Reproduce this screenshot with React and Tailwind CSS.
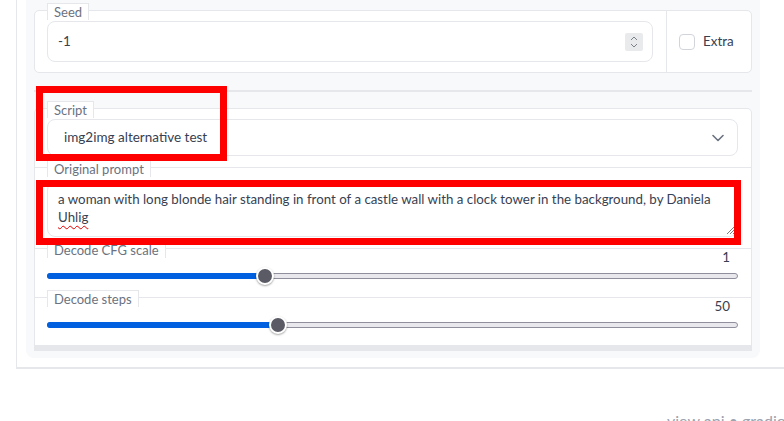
import React from "react";

const sliders = [
  { label: "Decode CFG scale", value: "1", ratio: 0.3105, last: false },
  { label: "Decode steps", value: "50", ratio: 0.33, last: true },
];

function BlockLabel({ children }) {
  return (
    <div className="self-start -mt-[8px] h-[17px] whitespace-nowrap border-l border-r border-t border-[#e5e7eb] bg-white px-[6px] text-[13px] leading-[16px] text-[#6b7280]">
      {children}
    </div>
  );
}

function Stepper() {
  return (
    <svg width="18" height="18" viewBox="0 0 18 18" className="rounded-[2px] bg-[#e9eaec]">
      <polyline points="6,7 9,4 12,7" fill="none" stroke="#7b8089" strokeWidth="1" />
      <polyline points="6,11 9,14 12,11" fill="none" stroke="#7b8089" strokeWidth="1" />
    </svg>
  );
}

function Chevron() {
  return (
    <svg width="12" height="8" viewBox="0 0 12 8">
      <polyline points="1,1.5 6,6.5 11,1.5" fill="none" stroke="#6b7280" strokeWidth="1.6" strokeLinecap="round" strokeLinejoin="round" />
    </svg>
  );
}

function ResizeHandle() {
  return (
    <svg width="11" height="11" viewBox="0 0 11 11" className="absolute bottom-[1px] right-[1px]">
      <line x1="10" y1="2" x2="2" y2="10" stroke="#7d7d7d" strokeWidth="1" />
      <line x1="10" y1="5" x2="5" y2="10" stroke="#7d7d7d" strokeWidth="1" />
      <line x1="10" y1="8" x2="8" y2="10" stroke="#7d7d7d" strokeWidth="1" />
    </svg>
  );
}

function Slider({ ratio }) {
  const pos = `calc(${ratio} * (100% - 18px) + 9px)`;
  return (
    <div className="relative mt-[1px] h-[18px]">
      <div className="absolute left-0 right-0 top-[6px] h-[6px] rounded-full border border-[#8f8f9d] bg-[#e9e9ed]" />
      <div className="absolute left-0 top-[6px] h-[6px] rounded-l-full bg-[#0060df]" style={{ width: pos }} />
      <div
        className="absolute top-0 -ml-[9px] h-[18px] w-[18px] rounded-full border-2 border-white bg-[#5b5b66] shadow-[0_1px_2px_rgba(0,0,0,0.35)]"
        style={{ left: pos }}
      />
    </div>
  );
}

export default function App() {
  return (
    <div className="relative h-[421px] overflow-hidden bg-white font-['Lato',sans-serif] text-[#374151]">
      <div className="ml-4 w-[900px] border-b-2 border-l border-[#e5e7eb] pb-[9px] pl-[9px]">
        <div className="w-[734px] rounded-b-lg bg-[#f8f9fa] px-2 pb-[7px] pt-[10px]">
          {/* Seed block */}
          <div className="flex rounded-[5px] border border-[#e5e7eb] bg-white">
            <div className="flex flex-1 flex-col pb-[10px] pl-3 pr-[13px]">
              <BlockLabel>Seed</BlockLabel>
              <div className="mt-[1px] flex h-[41px] items-center justify-between rounded-lg border border-[#e5e7eb] pl-[10px] pr-[9px] text-[13.4px]">
                <span>-1</span>
                <Stepper />
              </div>
            </div>
            <div className="flex w-[85px] items-center gap-2 border-l border-[#e5e7eb] pl-3">
              <span className="h-4 w-4 rounded-[4px] border border-[#d1d5db] bg-white" />
              <span className="text-[13.4px]">Extra</span>
            </div>
          </div>

          <div className="mt-[17px] h-[2px] bg-[#e5e7eb]" />

          {/* Script form */}
          <div className="mt-[16px] rounded-t-[5px] border-x border-b-[6px] border-t border-[#e5e7eb] bg-white">
            <div className="flex flex-col pb-[11px] pl-3 pr-[13px]">
              <BlockLabel>Script</BlockLabel>
              <div className="mt-[1px] flex h-[37px] items-center justify-between rounded-lg border border-[#e5e7eb] pl-[16px] pr-[13px] text-[13.5px]">
                <span>img2img alternative test</span>
                <Chevron />
              </div>
            </div>

            <div className="flex flex-col border-t border-[#e5e7eb] pb-[11px] pl-3 pr-[13px]">
              <BlockLabel>Original prompt</BlockLabel>
              <div className="relative mt-[5px] h-[55px] rounded-lg border border-[#e5e7eb] px-[10px] pt-[7px] text-[13.3px] leading-[18px]">
                a woman with long blonde hair standing in front of a castle wall with a clock tower in the background, by Daniela{" "}
                <span className="underline decoration-[#e00000] decoration-wavy decoration-1 underline-offset-[3px]">Uhlig</span>
                <ResizeHandle />
              </div>
            </div>

            {sliders.map((s) => (
              <div
                key={s.label}
                className={`flex flex-col border-t border-[#e5e7eb] pl-3 pr-[13px] ${s.last ? "pb-[11px]" : "pb-[12px]"}`}
              >
                <div className="flex items-start justify-between">
                  <BlockLabel>{s.label}</BlockLabel>
                  <span className="pr-2 text-[13.4px] leading-[17px]">{s.value}</span>
                </div>
                <Slider ratio={s.ratio} />
              </div>
            ))}
          </div>
        </div>
      </div>

      <div className="ml-[667px] mt-[42px] whitespace-nowrap text-[16px] leading-[20px] text-[#9ca3af]">view api • gradio</div>

      <div className="pointer-events-none absolute left-[36px] top-[86px] h-[75px] w-[191px] border-[7px] border-[#ff0000]" />
      <div className="pointer-events-none absolute left-[36px] top-[180px] h-[65px] w-[705px] border-[7px] border-[#ff0000]" />
    </div>
  );
}
